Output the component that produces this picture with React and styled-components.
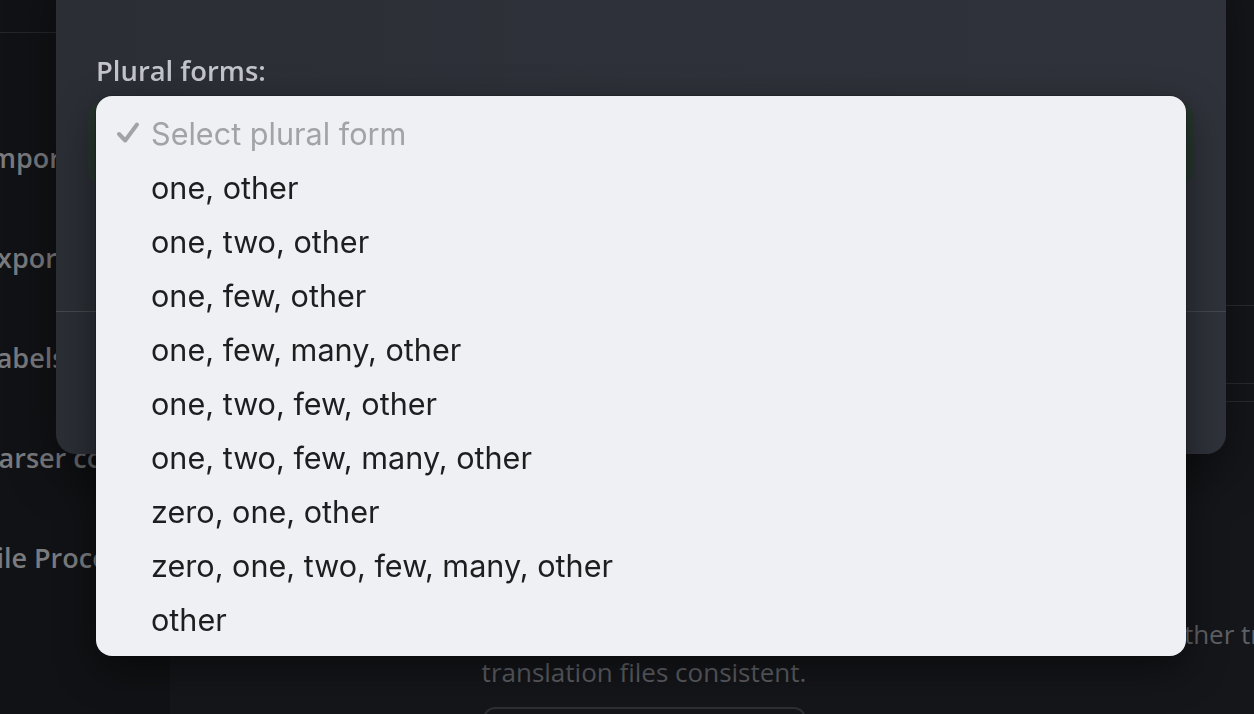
import React from "react";
import styled, { createGlobalStyle } from "styled-components";

const Global = createGlobalStyle`
  html, body { margin: 0; padding: 0; background: #15161a; overflow: hidden; }
  body { font-family: "Open Sans", "Noto Sans", sans-serif; }
  * { box-sizing: border-box; }
`;

const Page = styled.div`
  display: flex;
  width: 100vw;
  height: 100vh;
  overflow: hidden;
`;

const Sidebar = styled.aside`
  width: 170px;
  flex: none;
  background: #111215;
  display: flex;
  flex-direction: column;
  overflow: hidden;
`;

const SideHeader = styled.div`
  height: 33px;
  border-bottom: 1px solid #25262a;
`;

const Nav = styled.nav`
  display: flex;
  flex-direction: column;
  padding-top: 74px;
  margin-left: -18px;
`;

const NavItem = styled.div`
  height: 100px;
  display: flex;
  align-items: center;
  font-size: 27px;
  font-weight: 600;
  color: #7a7b7f;
  white-space: nowrap;
`;

const Main = styled.main`
  flex: 1;
  min-width: 0;
  overflow: hidden;
  background: #15161a;
  display: flex;
  flex-direction: column;
  padding-right: 136px;
`;

const Section = styled.div`
  height: ${(p) => p.$h}px;
  flex: none;
  border-bottom: 1px solid #2b2c30;
  margin-right: -136px;
`;

const Empty = styled.div`
  margin-top: 100px;
  display: flex;
  flex-direction: column;
  align-items: center;
`;

const EmptyTitle = styled.div`
  font-size: 28px;
  font-weight: 600;
  color: #9a9ba0;
  height: 113px;
  display: flex;
  align-items: center;
`;

const Line = styled.div`
  width: 100%;
  display: flex;
  justify-content: center;
  white-space: nowrap;
  font-size: 26px;
  line-height: 38px;
  color: #5f6065;
`;

const OutlineButton = styled.div`
  margin-top: 16px;
  width: 323px;
  height: 52px;
  flex: none;
  border: 2px solid #2e2f33;
  border-radius: 12px;
`;

const Overlay = styled.div`
  position: fixed;
  inset: 0;
`;

const Modal = styled.div`
  position: absolute;
  left: 56px;
  top: -40px;
  width: 1170px;
  height: 494px;
  border-radius: 20px;
  background: linear-gradient(90deg, #2b2e35 0%, #2e3139 50%, #2f323a 100%);
  box-shadow: 0 20px 50px rgba(0, 0, 0, 0.45);
  display: flex;
  flex-direction: column;
  overflow: hidden;
`;

const ModalBody = styled.div`
  padding: 94px 40px 0;
  height: 352px;
  flex: none;
  display: flex;
  flex-direction: column;
  border-bottom: 1px solid #44474d;
`;

const Label = styled.label`
  font-size: 27.4px;
  line-height: 34px;
  font-weight: 600;
  color: #c3c5ca;
`;

const SelectBox = styled.div`
  margin-top: 20px;
  height: 71px;
  border-radius: 10px;
  background: #2a2f30;
  box-shadow: 0 0 0 8px #27352e;
`;

const ModalFooter = styled.div`
  flex: 1;
  display: flex;
  justify-content: flex-end;
  align-items: center;
  gap: 16px;
  padding: 0 40px;
`;

const FooterButton = styled.div`
  height: 52px;
  padding: 0 28px;
  border-radius: 12px;
  display: flex;
  align-items: center;
  font-size: 22px;
  font-weight: 600;
  color: #d0d2d6;
  background: ${(p) => (p.$primary ? "#2f6b48" : "#3a3d45")};
`;

const Dropdown = styled.div`
  position: absolute;
  left: 96px;
  top: 96px;
  width: 1090px;
  height: 560px;
  padding: 10px 0;
  border-radius: 16px;
  background: #eff0f3;
  box-shadow: 0 14px 40px rgba(0, 0, 0, 0.45), 0 0 0 0.5px rgba(0, 0, 0, 0.3);
  display: flex;
  flex-direction: column;
`;

const Option = styled.div`
  height: 54px;
  display: flex;
  align-items: center;
  padding-left: 20px;
  font-family: Inter, "Noto Sans", sans-serif;
  font-size: 30.6px;
  color: ${(p) => (p.$placeholder ? "#a2a3a6" : "#1e1e21")};
`;

const CheckSlot = styled.span`
  width: 35px;
  flex: none;
  display: flex;
  align-items: center;
`;

const Check = () => (
  <svg width="24" height="24" viewBox="0 0 24 24" fill="none">
    <path
      d="M3 13 L9.2 19.5 L21 3.5"
      stroke="#a2a3a6"
      strokeWidth="4"
      strokeLinecap="round"
      strokeLinejoin="round"
    />
  </svg>
);

const nav = ["Import", "Export", "Labels", "Parser config", "File Processing"];

const options = [
  "Select plural form",
  "one, other",
  "one, two, other",
  "one, few, other",
  "one, few, many, other",
  "one, two, few, other",
  "one, two, few, many, other",
  "zero, one, other",
  "zero, one, two, few, many, other",
  "other",
];

export default function App() {
  return (
    <>
      <Global />
      <Page>
        <Sidebar>
          <SideHeader />
          <Nav>
            {nav.map((n) => (
              <NavItem key={n}>{n}</NavItem>
            ))}
          </Nav>
        </Sidebar>
        <Main>
          <Section $h={306} />
          <Section $h={78} />
          <Section $h={18} />
          <Empty>
            <EmptyTitle>No plural forms configured</EmptyTitle>
            <Line>
              Plural forms define how many variants each translation key needs for this language. Pick the set that matches the one used by other translators in our team to keep all
            </Line>
            <Line>translation files consistent.</Line>
            <OutlineButton />
          </Empty>
        </Main>
      </Page>
      <Overlay>
        <Modal>
          <ModalBody>
            <Label>Plural forms:</Label>
            <SelectBox />
          </ModalBody>
          <ModalFooter>
            <FooterButton>Cancel</FooterButton>
            <FooterButton $primary>Save</FooterButton>
          </ModalFooter>
        </Modal>
        <Dropdown>
          {options.map((o, i) => (
            <Option key={o} $placeholder={i === 0}>
              <CheckSlot>{i === 0 && <Check />}</CheckSlot>
              {o}
            </Option>
          ))}
        </Dropdown>
      </Overlay>
    </>
  );
}
